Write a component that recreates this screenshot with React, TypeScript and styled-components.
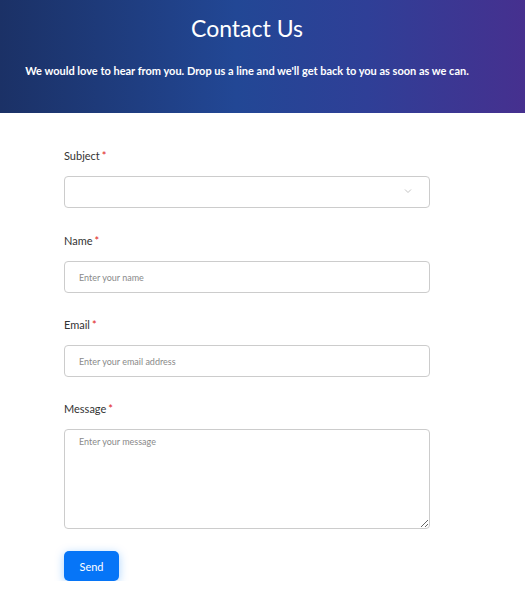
import styled, { createGlobalStyle } from "styled-components";

const GlobalStyle = createGlobalStyle`
  html, body {
    margin: 0;
    padding: 0;
    background: #fff;
    font-family: Lato, "Open Sans", sans-serif;
  }
  * {
    box-sizing: border-box;
  }
`;

const Header = styled.header`
  height: 113px;
  padding: 14px 31px 0 0;
  display: flex;
  flex-direction: column;
  align-items: center;
  background: linear-gradient(90deg, #1b3166 0%, #224795 45%, #2f3f97 70%, #46308f 100%);
  color: #fff;
`;

const Title = styled.h1`
  margin: 0;
  font-size: 23px;
  font-weight: 400;
  line-height: 28px;
`;

const Subtitle = styled.p`
  margin: 21px 0 0;
  font-size: 11px;
  font-weight: 700;
  line-height: 16px;
  text-align: center;
`;

const Form = styled.form`
  width: 366px;
  margin-left: 64px;
  padding-top: 35px;
  display: flex;
  flex-direction: column;
  row-gap: 24px;
`;

const Field = styled.div<{ $spaced?: boolean }>`
  display: flex;
  flex-direction: column;
  row-gap: 12px;
  margin-bottom: ${({ $spaced }) => ($spaced ? "1px" : "0")};
`;

const Label = styled.label`
  font-size: 11px;
  line-height: 16px;
  color: #333;
`;

const Required = styled.span`
  margin-left: 2px;
  color: #e02020;
`;

const SelectWrapper = styled.div`
  position: relative;
`;

const Select = styled.select`
  width: 100%;
  height: 32px;
  border: 1px solid #cccccc;
  border-radius: 4px;
  background: #fff;
  appearance: none;
  outline: none;
`;

const Chevron = styled.svg`
  position: absolute;
  right: 18px;
  top: 12px;
  pointer-events: none;
`;

const Input = styled.input`
  width: 100%;
  height: 32px;
  padding: 0 14px;
  border: 1px solid #cccccc;
  border-radius: 4px;
  font-family: Lato, sans-serif;
  font-size: 9px;
  outline: none;

  &::placeholder {
    color: #8a8a8a;
  }
`;

const TextArea = styled.textarea`
  width: 100%;
  height: 100px;
  padding: 6px 14px;
  border: 1px solid #cccccc;
  border-radius: 4px;
  font-family: Lato, sans-serif;
  font-size: 9px;
  outline: none;

  &::placeholder {
    color: #8a8a8a;
  }
`;

const SendButton = styled.button`
  align-self: flex-start;
  width: 55px;
  height: 30px;
  margin-top: -2px;
  border: none;
  border-radius: 5px;
  background: #0675f7;
  color: #fff;
  font-family: Lato, sans-serif;
  font-size: 11px;
  font-weight: 400;
  box-shadow: 0 2px 10px rgba(10, 130, 255, 0.35);
  cursor: pointer;
`;

export default function App() {
  return (
    <>
      <GlobalStyle />
      <Header>
        <Title>Contact Us</Title>
        <Subtitle>
          We would love to hear from you. Drop us a line and we'll get back to you as soon as we can.
        </Subtitle>
      </Header>
      <Form onSubmit={(e) => e.preventDefault()}>
        <Field $spaced>
          <Label>
            Subject<Required>*</Required>
          </Label>
          <SelectWrapper>
            <Select defaultValue="">
              <option value=""></option>
            </Select>
            <Chevron width="8" height="6" viewBox="0 0 8 6" fill="none">
              <path d="M1 1.5l3 3 3-3" stroke="#c4c4c4" strokeWidth="1" />
            </Chevron>
          </SelectWrapper>
        </Field>
        <Field>
          <Label>
            Name<Required>*</Required>
          </Label>
          <Input placeholder="Enter your name" />
        </Field>
        <Field>
          <Label>
            Email<Required>*</Required>
          </Label>
          <Input placeholder="Enter your email address" />
        </Field>
        <Field>
          <Label>
            Message<Required>*</Required>
          </Label>
          <TextArea placeholder="Enter your message" />
        </Field>
        <SendButton type="submit">Send</SendButton>
      </Form>
    </>
  );
}
